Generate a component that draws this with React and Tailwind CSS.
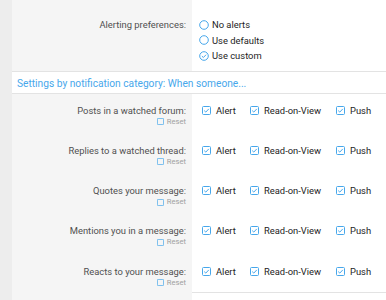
const BLUE = "#47a7eb";

function Radio({ checked }) {
    return (
        <svg width="10" height="10" viewBox="0 0 10 10" className="shrink-0">
            <circle cx="5" cy="5" r="4.3" fill="none" stroke={BLUE} strokeWidth="1" />
            {checked && (
                <path d="M2.9 5.1 L4.4 6.5 L7.1 3.7" fill="none" stroke={BLUE} strokeWidth="1" />
            )}
        </svg>
    );
}

function Box({ checked, size = 9 }) {
    return (
        <svg width={size} height={size} viewBox="0 0 9 9" className="shrink-0">
            <rect x="0.5" y="0.5" width="8" height="8" rx="1" fill="none" stroke={BLUE} strokeWidth="1" />
            {checked && (
                <path d="M2.2 4.6 L3.8 6.1 L6.8 2.9" fill="none" stroke={BLUE} strokeWidth="1" />
            )}
        </svg>
    );
}

const categories = [
    "Posts in a watched forum:",
    "Replies to a watched thread:",
    "Quotes your message:",
    "Mentions you in a message:",
    "Reacts to your message:",
];

export default function App() {
    return (
        <div
            className="flex h-[300px] w-[386px] overflow-hidden bg-white text-[#1d1d1d]"
            style={{ fontFamily: 'Roboto, "Noto Sans", sans-serif' }}
        >
            {/* page gutter */}
            <div className="w-[12px] shrink-0 bg-[#ededed]" />

            <div className="flex flex-1 flex-col">
                {/* Alerting preferences */}
                <div className="flex h-[72px] shrink-0 border-b border-[#e3e3e3]">
                    <div className="w-[180px] shrink-0 bg-[#f5f5f5] pr-[6px] pt-[17px] text-right text-[9.4px] leading-[15px] text-[#505050]">
                        Alerting preferences:
                    </div>
                    <div className="flex flex-col pl-[7px] pt-[17px] text-[9.4px] leading-[15.5px]">
                        {[["No alerts", false], ["Use defaults", false], ["Use custom", true]].map(([label, on]) => (
                            <div key={label} className="flex items-center gap-[3px]">
                                <Radio checked={on} />
                                <span>{label}</span>
                            </div>
                        ))}
                    </div>
                </div>

                {/* Heading */}
                <div className="flex h-[22px] shrink-0 items-center border-b border-[#e3e3e3] pl-[5px] pt-[2px] text-[10.2px] text-[#47a7eb]">
                    Settings by notification category: When someone...
                </div>

                {/* Category rows */}
                <div className="flex flex-1">
                    <div className="flex w-[180px] shrink-0 flex-col bg-[#f5f5f5]">
                        <div className="flex flex-col gap-[13.25px] pt-[9.5px]">
                            {categories.map((c) => (
                                <div key={c} className="flex h-[27px] flex-col items-end pr-[6px]">
                                    <div className="text-[9.4px] leading-[13px] text-[#505050]">{c}</div>
                                    <div className="flex items-center gap-[3px] text-[7.6px] leading-[10px] text-[#a0a0a0]">
                                        <Box size={7} />
                                        <span>Reset</span>
                                    </div>
                                </div>
                            ))}
                        </div>
                    </div>
                    <div className="flex flex-1 flex-col">
                        <div className="flex flex-col gap-[13.25px] border-b border-[#e3e3e3] pb-[0.5px] pt-[9.5px]">
                            {categories.map((c) => (
                                <div key={c} className="flex h-[27px] items-start pl-[10px] text-[9.4px] leading-[13px]">
                                    <div className="flex w-[48px] items-center gap-[5px]">
                                        <Box checked />
                                        <span>Alert</span>
                                    </div>
                                    <div className="flex w-[86px] items-center gap-[5px]">
                                        <Box checked />
                                        <span>Read-on-View</span>
                                    </div>
                                    <div className="flex items-center gap-[5px]">
                                        <Box checked />
                                        <span>Push</span>
                                    </div>
                                </div>
                            ))}
                        </div>
                    </div>
                </div>
            </div>
        </div>
    );
}
